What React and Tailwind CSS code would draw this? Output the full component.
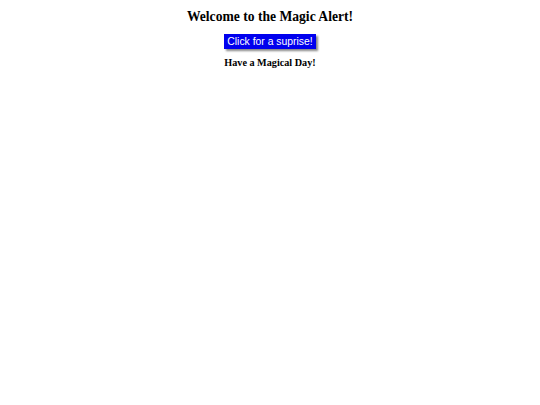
export default function App() {
  return (
    <div className="flex flex-col items-center pt-[9px] font-['Liberation_Serif',serif] text-black">
      <h1 className="text-[13.6px] font-bold leading-[16px]">Welcome to the Magic Alert!</h1>
      <button className="mt-[9px] bg-[#0000ee] px-[3px] py-[1px] text-[10.4px] leading-[13px] text-white font-['Liberation_Sans',sans-serif] shadow-[2px_2px_2px_#888]">
        Click for a suprise!
      </button>
      <p className="mt-[8px] text-[10.2px] font-bold leading-[12px]">Have a Magical Day!</p>
    </div>
  );
}
